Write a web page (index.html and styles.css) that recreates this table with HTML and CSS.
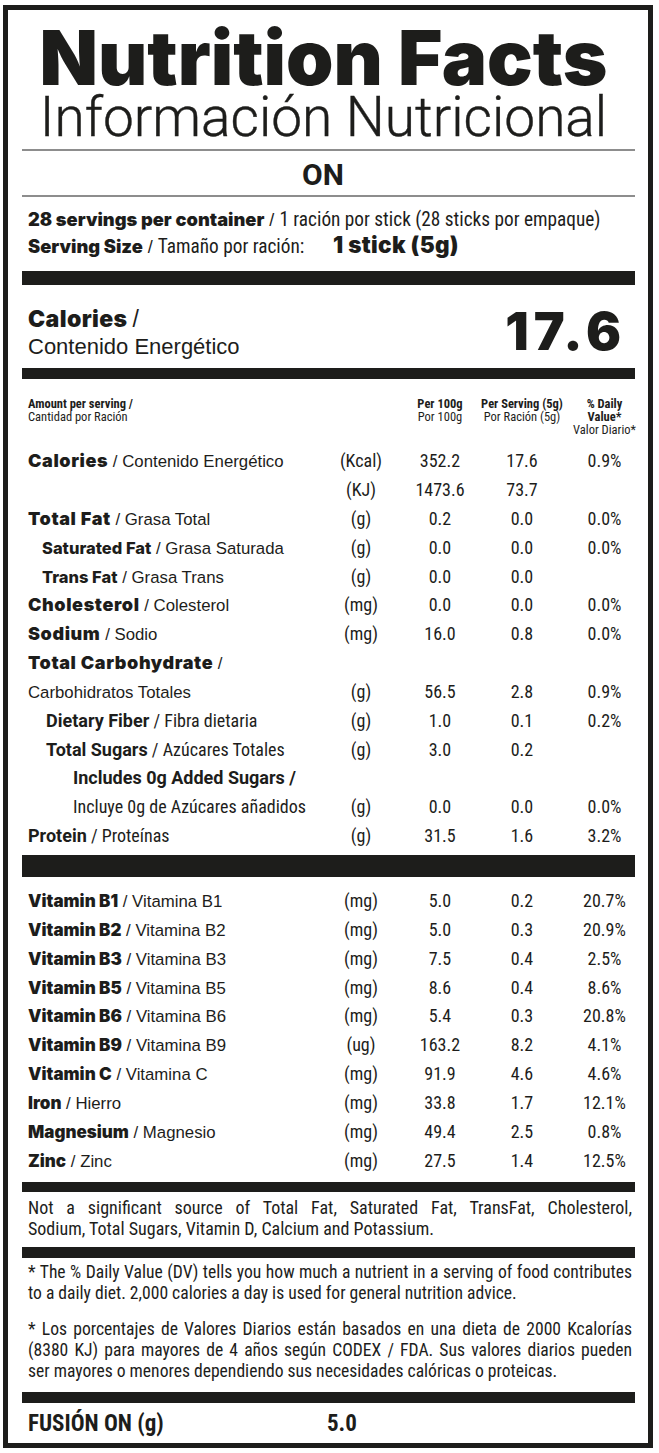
FILE: index.html
```html
<!DOCTYPE html>
<html lang="es">
<head>
<meta charset="utf-8">
<title>Nutrition Facts</title>
<link rel="stylesheet" href="styles.css">
</head>
<body>
<div class="label">
  <header class="head">
    <h1 class="title">Nutrition Facts</h1>
    <p class="subtitle">Información Nutricional</p>
  </header>
  <div class="rule-gray rule-1"></div>
  <div class="brand">ON</div>
  <div class="rule-gray rule-2"></div>
  <div class="serving">
    <p class="sv-line"><span class="sv-heavy">28 servings per container</span> / <span class="cond">1 ración por stick (28 sticks por empaque)</span></p>
    <p class="sv-line"><span class="sv-left"><span class="sv-heavy">Serving Size</span> / <span class="cond">Tamaño por ración:</span></span><span class="stick">1 stick (5g)</span></p>
  </div>
  <div class="bar bar-a"></div>
  <div class="cal">
    <div class="cal-left">
      <p class="cal-en">Calories <span class="slash">/</span></p>
      <p class="cal-es">Contenido Energético</p>
    </div>
    <div class="cal-num">17.6</div>
  </div>
  <div class="bar bar-b"></div>

  <div class="thead">
    <div class="th th-label"><b>Amount per serving /</b><br>Cantidad por Ración</div>
    <div class="th"></div>
    <div class="th th-c"><span><b>Per 100g</b><br>Por 100g</span></div>
    <div class="th th-c"><span><b>Per Serving (5g)</b><br>Por Ración (5g)</span></div>
    <div class="th th-c th-dv"><span><b>% Daily<br>Value*</b><br>Valor Diario*</span></div>
  </div>

  <div class="rows main-rows">
    <div class="row"><div class="lbl"><span class="heavy">Calories</span> / Contenido Energético</div><div class="u">(Kcal)</div><div class="v">352.2</div><div class="v">17.6</div><div class="v dv">0.9%</div></div>
    <div class="row"><div class="lbl"></div><div class="u">(KJ)</div><div class="v">1473.6</div><div class="v">73.7</div><div class="v dv"></div></div>
    <div class="row"><div class="lbl"><span class="heavy">Total Fat</span> / Grasa Total</div><div class="u">(g)</div><div class="v">0.2</div><div class="v">0.0</div><div class="v dv">0.0%</div></div>
    <div class="row"><div class="lbl ind-1"><span class="semi">Saturated Fat</span> / Grasa Saturada</div><div class="u">(g)</div><div class="v">0.0</div><div class="v">0.0</div><div class="v dv">0.0%</div></div>
    <div class="row"><div class="lbl ind-1"><span class="semi">Trans Fat</span> / Grasa Trans</div><div class="u">(g)</div><div class="v">0.0</div><div class="v">0.0</div><div class="v dv"></div></div>
    <div class="row"><div class="lbl"><span class="heavy">Cholesterol</span> / Colesterol</div><div class="u">(mg)</div><div class="v">0.0</div><div class="v">0.0</div><div class="v dv">0.0%</div></div>
    <div class="row"><div class="lbl"><span class="heavy">Sodium</span> / Sodio</div><div class="u">(mg)</div><div class="v">16.0</div><div class="v">0.8</div><div class="v dv">0.0%</div></div>
    <div class="row"><div class="lbl"><span class="heavy">Total Carbohydrate</span> /</div><div class="u"></div><div class="v"></div><div class="v"></div><div class="v dv"></div></div>
    <div class="row"><div class="lbl">Carbohidratos Totales</div><div class="u">(g)</div><div class="v">56.5</div><div class="v">2.8</div><div class="v dv">0.9%</div></div>
    <div class="row"><div class="lbl ind-2 cond"><span class="bc">Dietary Fiber</span> / Fibra dietaria</div><div class="u">(g)</div><div class="v">1.0</div><div class="v">0.1</div><div class="v dv">0.2%</div></div>
    <div class="row"><div class="lbl ind-2 cond"><span class="bc">Total Sugars</span> / Azúcares Totales</div><div class="u">(g)</div><div class="v">3.0</div><div class="v">0.2</div><div class="v dv"></div></div>
    <div class="row"><div class="lbl ind-3 cond"><span class="bc">Includes 0g Added Sugars /</span></div><div class="u"></div><div class="v"></div><div class="v"></div><div class="v dv"></div></div>
    <div class="row"><div class="lbl ind-3 cond">Incluye 0g de Azúcares añadidos</div><div class="u">(g)</div><div class="v">0.0</div><div class="v">0.0</div><div class="v dv">0.0%</div></div>
    <div class="row"><div class="lbl cond"><span class="bc">Protein</span> / Proteínas</div><div class="u">(g)</div><div class="v">31.5</div><div class="v">1.6</div><div class="v dv">3.2%</div></div>
  </div>
  <div class="bar bar-c"></div>

  <div class="rows vit-rows">
    <div class="row"><div class="lbl"><span class="vit">Vitamin B1</span> / Vitamina B1</div><div class="u">(mg)</div><div class="v">5.0</div><div class="v">0.2</div><div class="v dv">20.7%</div></div>
    <div class="row"><div class="lbl"><span class="vit">Vitamin B2</span> / Vitamina B2</div><div class="u">(mg)</div><div class="v">5.0</div><div class="v">0.3</div><div class="v dv">20.9%</div></div>
    <div class="row"><div class="lbl"><span class="vit">Vitamin B3</span> / Vitamina B3</div><div class="u">(mg)</div><div class="v">7.5</div><div class="v">0.4</div><div class="v dv">2.5%</div></div>
    <div class="row"><div class="lbl"><span class="vit">Vitamin B5</span> / Vitamina B5</div><div class="u">(mg)</div><div class="v">8.6</div><div class="v">0.4</div><div class="v dv">8.6%</div></div>
    <div class="row"><div class="lbl"><span class="vit">Vitamin B6</span> / Vitamina B6</div><div class="u">(mg)</div><div class="v">5.4</div><div class="v">0.3</div><div class="v dv">20.8%</div></div>
    <div class="row"><div class="lbl"><span class="vit">Vitamin B9</span> / Vitamina B9</div><div class="u">(ug)</div><div class="v">163.2</div><div class="v">8.2</div><div class="v dv">4.1%</div></div>
    <div class="row"><div class="lbl"><span class="vit">Vitamin C</span> / Vitamina C</div><div class="u">(mg)</div><div class="v">91.9</div><div class="v">4.6</div><div class="v dv">4.6%</div></div>
    <div class="row"><div class="lbl"><span class="vit">Iron</span> / Hierro</div><div class="u">(mg)</div><div class="v">33.8</div><div class="v">1.7</div><div class="v dv">12.1%</div></div>
    <div class="row"><div class="lbl"><span class="vit">Magnesium</span> / Magnesio</div><div class="u">(mg)</div><div class="v">49.4</div><div class="v">2.5</div><div class="v dv">0.8%</div></div>
    <div class="row"><div class="lbl"><span class="vit">Zinc</span> / Zinc</div><div class="u">(mg)</div><div class="v">27.5</div><div class="v">1.4</div><div class="v dv">12.5%</div></div>
  </div>
  <div class="bar bar-d"></div>

  <p class="para note"><span class="just">Not a significant source of Total Fat, Saturated Fat, TransFat, Cholesterol,</span><span>Sodium, Total Sugars, Vitamin D, Calcium and Potassium.</span></p>
  <div class="bar bar-e"></div>

  <p class="para dv-1"><span class="just">* The % Daily Value (DV) tells you how much a nutrient in a serving of food contributes</span><span>to a daily diet. 2,000 calories a day is used for general nutrition advice.</span></p>
  <p class="para dv-2"><span class="just">* Los porcentajes de Valores Diarios están basados en una dieta de 2000 Kcalorías</span><span class="just">(8380 KJ) para mayores de 4 años según CODEX / FDA. Sus valores diarios pueden</span><span>ser mayores o menores dependiendo sus necesidades calóricas o proteicas.</span></p>
  <div class="bar bar-f"></div>

  <div class="fusion"><span class="fusion-name">FUSIÓN ON (g)</span><span class="fusion-val">5.0</span></div>
</div>
</body>
</html>
```
FILE: styles.css
```css
* { box-sizing: border-box; }
html, body { margin: 0; padding: 0; background: #ffffff; }
body {
  color: #1d1d1b;
  font-family: "Liberation Sans", Arial, sans-serif;
}
p, h1 { margin: 0; }

.label {
  margin: 5px 0 0 3px;
  width: 650px;
  height: 1443px;
  border: 5px solid #1d1d1b;
  padding: 0 13px 0 14px;
  display: flex;
  flex-direction: column;
  overflow: hidden;
}

/* header */
.head {
  padding: 12.3px 10px 0 0;
  text-align: center;
  white-space: nowrap;
}
.title {
  font-family: Inter, "Liberation Sans", sans-serif;
  font-weight: 900;
  font-size: 76px;
  line-height: 70px;
}
.subtitle {
  margin-top: 2.9px;
  font-family: Roboto, "Liberation Sans", sans-serif;
  font-weight: 300;
  font-size: 55px;
  line-height: 44px;
  -webkit-text-stroke: 0.4px #1d1d1b;
}
.rule-gray {
  height: 2px;
  background: #8d8d8d;
  flex: none;
}
.rule-1 { margin-top: 9.8px; }
.rule-2 { margin-top: 4.6px; }

.brand {
  margin-top: 9.4px;
  padding-right: 11px;
  text-align: center;
  font-family: Roboto, sans-serif;
  font-weight: 700;
  font-stretch: 95%;
  font-size: 30px;
  line-height: 30px;
}

/* serving */
.serving { margin-top: 8.8px; padding-left: 6px; }
.sv-line {
  font-size: 18px;
  line-height: 26px;
  white-space: nowrap;
}
.sv-heavy {
  font-family: Inter, "Liberation Sans", sans-serif;
  font-weight: 900;
  font-size: 18.3px;
}
.cond {
  font-family: Roboto, sans-serif;
  font-weight: 400;
  font-stretch: 80%;
}
.sv-line .cond { font-size: 19.3px; }
.sv-left { display: inline-block; width: 305px; }
.stick {
  font-family: Inter, "Liberation Sans", sans-serif;
  font-weight: 900;
  font-size: 22.5px;
  letter-spacing: 0.3px;
  line-height: 20px;
}

/* bars */
.bar { background: #1d1d1b; flex: none; }
.bar-a { margin-top: 11.2px; height: 14px; }
.bar-b { margin-top: 7.5px; height: 11px; }
.bar-c { margin-top: 4.5px; height: 22px; }
.bar-d { margin-top: 6px; height: 10px; }
.bar-e { margin-top: 7.3px; height: 11px; }
.bar-f { margin-top: 9.3px; height: 11px; }

/* calories */
.cal {
  padding: 21.5px 14px 0 6px;
  display: flex;
  justify-content: space-between;
  align-items: flex-start;
}
.cal-en {
  font-family: Inter, "Liberation Sans", sans-serif;
  font-weight: 900;
  font-size: 23px;
  letter-spacing: 0.4px;
  line-height: 27px;
}
.cal-en .slash { font-weight: 400; font-family: "Liberation Sans", sans-serif; }
.cal-es {
  font-size: 22px;
  line-height: 27px;
}
.cal-num {
  font-family: Inter, "Liberation Sans", sans-serif;
  font-weight: 900;
  font-size: 52px;
  letter-spacing: 5px;
  margin-right: -5px;
  line-height: 51px;
}

/* table header */
.thead {
  padding: 17.6px 0 0 6px;
  display: grid;
  grid-template-columns: 306px 54px 104px 60px 83px;
  font-family: Roboto, sans-serif;
  font-stretch: 85%;
  font-size: 12.5px;
  line-height: 13px;
  height: 57.2px;
  flex: none;
}
.th b { font-weight: 700; }
.th-c {
  display: flex;
  justify-content: center;
  text-align: center;
  white-space: nowrap;
}
.th-dv { padding-left: 22px; }

/* rows */
.rows { padding-left: 6px; flex: none; }
.main-rows { margin-top: 11px; }
.vit-rows { margin-top: 9.5px; }
.row {
  display: grid;
  grid-template-columns: 306px 54px 104px 60px 83px;
  align-items: baseline;
  height: 28.85px;
  line-height: 28.85px;
}
.vit-rows .row { height: 28.89px; line-height: 28.89px; }
.lbl {
  font-size: 16.8px;
  white-space: nowrap;
}
.heavy {
  font-family: Inter, "Liberation Sans", sans-serif;
  font-weight: 900;
  font-size: 18px;
  letter-spacing: 0.6px;
}
.semi {
  font-family: Inter, "Liberation Sans", sans-serif;
  font-weight: 800;
  font-size: 16.5px;
}
.vit {
  font-family: Inter, "Liberation Sans", sans-serif;
  font-weight: 900;
  font-size: 17px;
}
.lbl.cond { font-size: 18px; font-stretch: 84%; }
.bc {
  font-family: Roboto, sans-serif;
  font-weight: 700;
  font-stretch: 92%;
}
.ind-1 { padding-left: 14px; }
.ind-2 { padding-left: 18px; }
.ind-3 { padding-left: 45px; }
.u, .v {
  text-align: center;
  font-family: Roboto, sans-serif;
  font-stretch: 75%;
  font-size: 18px;
  white-space: nowrap;
}
.dv { padding-left: 22px; }

/* notes */
.para {
  padding: 0 3px 0 6px;
  font-family: Roboto, sans-serif;
  font-size: 17.6px;
  line-height: 21px;
  white-space: nowrap;
}
.para span { display: block; }
.para .just {
  text-align: justify;
  text-align-last: justify;
  white-space: normal;
}
.note { margin-top: 5.7px; font-stretch: 87.5%; font-size: 18px; }
.dv-1 { margin-top: 4.7px; font-stretch: 80%; }
.dv-2 { margin-top: 15px; font-stretch: 81%; }

.fusion {
  margin-top: 6.8px;
  padding-left: 6px;
  display: flex;
  font-family: Roboto, sans-serif;
  font-weight: 700;
  font-stretch: 85%;
  font-size: 23px;
  line-height: 30px;
}
.fusion-name { width: 299px; }
```
